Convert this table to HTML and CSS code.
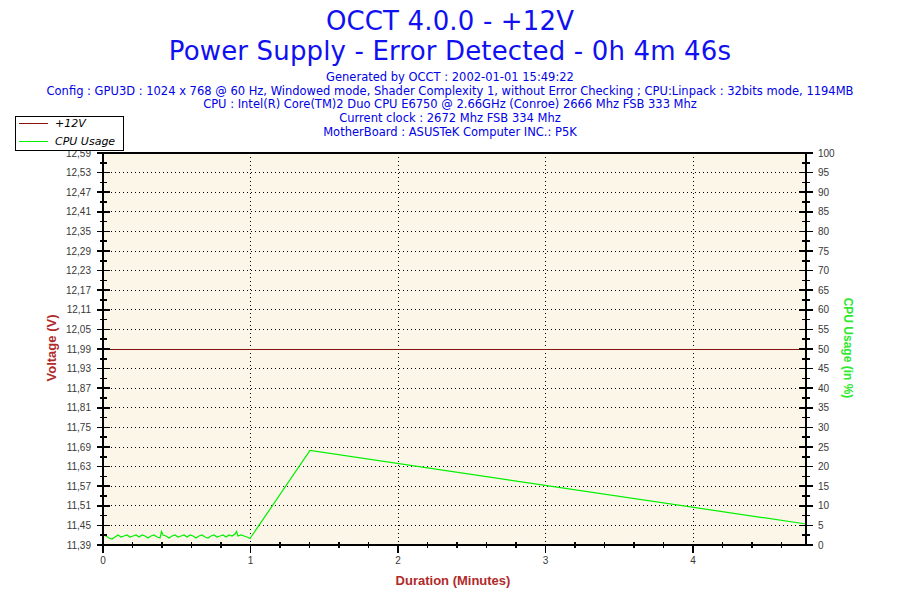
FILE: index.html
```html
<!DOCTYPE html>
<html>
<head>
<meta charset="utf-8">
<link rel="stylesheet" href="styles.css">
</head>
<body>
<div class="page">
  <header class="head">
    <div class="title">OCCT 4.0.0 - +12V</div>
    <div class="title">Power Supply - Error Detected - 0h 4m 46s</div>
    <div class="info">
      <div class="line">Generated by OCCT : 2002-01-01 15:49:22</div>
      <div class="line">Config : GPU3D : 1024 x 768 @ 60 Hz, Windowed mode, Shader Complexity 1, without Error Checking ; CPU:Linpack : 32bits mode, 1194MB</div>
      <div class="line">CPU : Intel(R) Core(TM)2 Duo CPU E6750 @ 2.66GHz (Conroe) 2666 Mhz FSB 333 Mhz</div>
      <div class="line">Current clock : 2672 Mhz FSB 334 Mhz</div>
      <div class="line">MotherBoard : ASUSTeK Computer INC.: P5K</div>
    </div>
  </header>

  <svg class="chart" viewBox="0 140 900 460" width="900" height="460" xmlns="http://www.w3.org/2000/svg">
    <rect class="plot-bg" x="103" y="153" width="703" height="392"/>
    <path class="grid" d="M103 525.4H806M103 505.8H806M103 486.2H806M103 466.6H806M103 447H806M103 427.4H806M103 407.8H806M103 388.2H806M103 368.6H806M103 329.4H806M103 309.8H806M103 290.2H806M103 270.6H806M103 251H806M103 231.4H806M103 211.8H806M103 192.2H806M103 172.6H806"/>
    <path class="grid" d="M250.5 153V545M398 153V545M545.5 153V545M693 153V545"/>
    <path class="volt" d="M103 349H806"/>
    <polyline class="cpu" points="103,534 106,536 109,538 112,539 115,537 118,535 121,537 124,536 127,535 130,537 133,536 136,535 139,537 142,535 145,536 148,538 151,536 154,535 157,537 160,538 161.5,531.5 163,535 166,536 169,538 172,536 175,535 178,537 181,536 184,535 187,537 190,535 193,536 196,538 199,536 202,535 205,537 208,538 211,536 214,535 217,537 220,536 223,535 226,537 229,535 232,536 235,534 236.5,531.5 238,536 241,535 244,536 247,537 250,538.5 310,450.5 806,524"/>
    <path class="axis" d="M103 153H806M103 153V545H806M806 153V545"/>
    <path class="axis" d="M97 545H110M97 525.4H110M97 505.8H110M97 486.2H110M97 466.6H110M97 447H110M97 427.4H110M97 407.8H110M97 388.2H110M97 368.6H110M97 349H110M97 329.4H110M97 309.8H110M97 290.2H110M97 270.6H110M97 251H110M97 231.4H110M97 211.8H110M97 192.2H110M97 172.6H110M97 153H110"/>
    <path class="axis" d="M100 535.2H107M100 515.6H107M100 496H107M100 476.4H107M100 456.8H107M100 437.2H107M100 417.6H107M100 398H107M100 378.4H107M100 358.8H107M100 339.2H107M100 319.6H107M100 300H107M100 280.4H107M100 260.8H107M100 241.2H107M100 221.6H107M100 202H107M100 182.4H107M100 162.8H107"/>
    <path class="axis" d="M799 545H813M799 525.4H813M799 505.8H813M799 486.2H813M799 466.6H813M799 447H813M799 427.4H813M799 407.8H813M799 388.2H813M799 368.6H813M799 349H813M799 329.4H813M799 309.8H813M799 290.2H813M799 270.6H813M799 251H813M799 231.4H813M799 211.8H813M799 192.2H813M799 172.6H813M799 153H813"/>
    <path class="axis" d="M802 535.2H810M802 515.6H810M802 496H810M802 476.4H810M802 456.8H810M802 437.2H810M802 417.6H810M802 398H810M802 378.4H810M802 358.8H810M802 339.2H810M802 319.6H810M802 300H810M802 280.4H810M802 260.8H810M802 241.2H810M802 221.6H810M802 202H810M802 182.4H810M802 162.8H810"/>
    <path class="axis" d="M103 545V553M250.5 545V553M398 545V553M545.5 545V553M693 545V553"/>
    <path class="axis" d="M132.5 542V548M162 542V548M191.5 542V548M221 542V548M280 542V548M309.5 542V548M339 542V548M368.5 542V548M427.5 542V548M457 542V548M486.5 542V548M516 542V548M575 542V548M604.5 542V548M634 542V548M663.5 542V548M722.5 542V548M752 542V548M781.5 542V548"/>

    <g class="tl tl-left">
      <text x="91" y="548.5">11,39</text>
      <text x="91" y="528.9">11,45</text>
      <text x="91" y="509.3">11,51</text>
      <text x="91" y="489.7">11,57</text>
      <text x="91" y="470.1">11,63</text>
      <text x="91" y="450.5">11,69</text>
      <text x="91" y="430.9">11,75</text>
      <text x="91" y="411.3">11,81</text>
      <text x="91" y="391.7">11,87</text>
      <text x="91" y="372.1">11,93</text>
      <text x="91" y="352.5">11,99</text>
      <text x="91" y="332.9">12,05</text>
      <text x="91" y="313.3">12,11</text>
      <text x="91" y="293.7">12,17</text>
      <text x="91" y="274.1">12,23</text>
      <text x="91" y="254.5">12,29</text>
      <text x="91" y="234.9">12,35</text>
      <text x="91" y="215.3">12,41</text>
      <text x="91" y="195.7">12,47</text>
      <text x="91" y="176.1">12,53</text>
      <text x="91" y="156.5">12,59</text>
    </g>
    <g class="tl tl-right">
      <text x="818" y="548.5">0</text>
      <text x="818" y="528.9">5</text>
      <text x="818" y="509.3">10</text>
      <text x="818" y="489.7">15</text>
      <text x="818" y="470.1">20</text>
      <text x="818" y="450.5">25</text>
      <text x="818" y="430.9">30</text>
      <text x="818" y="411.3">35</text>
      <text x="818" y="391.7">40</text>
      <text x="818" y="372.1">45</text>
      <text x="818" y="352.5">50</text>
      <text x="818" y="332.9">55</text>
      <text x="818" y="313.3">60</text>
      <text x="818" y="293.7">65</text>
      <text x="818" y="274.1">70</text>
      <text x="818" y="254.5">75</text>
      <text x="818" y="234.9">80</text>
      <text x="818" y="215.3">85</text>
      <text x="818" y="195.7">90</text>
      <text x="818" y="176.1">95</text>
      <text x="818" y="156.5">100</text>
    </g>
    <g class="tl tl-bottom">
      <text x="103" y="564">0</text>
      <text x="250.5" y="564">1</text>
      <text x="398" y="564">2</text>
      <text x="545.5" y="564">3</text>
      <text x="693" y="564">4</text>
    </g>
    <text class="atitle atitle-volt" transform="translate(56 348) rotate(-90)">Voltage (V)</text>
    <text class="atitle atitle-cpu" transform="translate(844 348) rotate(90)">CPU Usage (in %)</text>
    <text class="atitle atitle-dur" x="453" y="585">Duration (Minutes)</text>
  </svg>

  <div class="legend">
    <div class="leg-row"><span class="leg-line leg-red"></span><span class="leg-text">+12V</span></div>
    <div class="leg-row"><span class="leg-line leg-green"></span><span class="leg-text">CPU Usage</span></div>
  </div>
</div>
</body>
</html>
```

FILE: styles.css
```css
html, body {
  margin: 0;
  padding: 0;
  background: #ffffff;
}

.page {
  position: relative;
  width: 900px;
  height: 600px;
  overflow: hidden;
}

.head {
  height: 140px;
  padding-top: 6px;
  box-sizing: border-box;
  text-align: center;
  color: #1010f0;
  font-family: "DejaVu Sans", Verdana, sans-serif;
}

.title {
  font-size: 26px;
  letter-spacing: 0.15px;
  line-height: 30px;
  white-space: nowrap;
}

.info {
  margin-top: 5px;
  color: #0000e8;
  font-size: 11.5px;
  line-height: 13.7px;
}

.line {
  white-space: nowrap;
}

.chart {
  display: block;
}

.plot-bg {
  fill: #fcf6e8;
}

.grid {
  fill: none;
  stroke: #000000;
  stroke-width: 1;
  stroke-dasharray: 1 3;
  shape-rendering: crispEdges;
}

.axis {
  fill: none;
  stroke: #000000;
  stroke-width: 1.5;
  shape-rendering: crispEdges;
}

.volt {
  fill: none;
  stroke: #8a1010;
  stroke-width: 1;
  shape-rendering: crispEdges;
}

.cpu {
  fill: none;
  stroke: #00f000;
  stroke-width: 1.2;
}

.tl {
  font-family: "Liberation Sans", Arial, sans-serif;
  font-size: 10px;
  fill: #383838;
}

.tl-left {
  text-anchor: end;
}

.tl-right {
  text-anchor: start;
}

.tl-bottom {
  text-anchor: middle;
}

.atitle {
  font-family: "Liberation Sans", Arial, sans-serif;
  font-weight: bold;
  text-anchor: middle;
}

.atitle-volt {
  font-size: 13px;
  fill: #b02a2a;
}

.atitle-dur {
  font-size: 13px;
  fill: #b02a2a;
}

.atitle-cpu {
  font-size: 12px;
  fill: #2ee82e;
}

.legend {
  position: absolute;
  left: 15px;
  top: 116px;
  width: 107px;
  height: 33px;
  border: 1px solid #000000;
  background: #ffffff;
  display: flex;
  flex-direction: column;
  justify-content: flex-start;
  gap: 5.4px;
  font-family: "DejaVu Sans", Verdana, sans-serif;
  font-size: 11px;
  font-style: italic;
  color: #000000;
}

.leg-row {
  display: flex;
  align-items: center;
  height: 13px;
}

.leg-line {
  display: block;
  width: 29px;
  height: 1px;
  margin-left: 3px;
  margin-right: 7px;
}

.leg-red {
  background: #8a1010;
}

.leg-green {
  background: #00f000;
}

.leg-text {
  line-height: 13px;
}
```
